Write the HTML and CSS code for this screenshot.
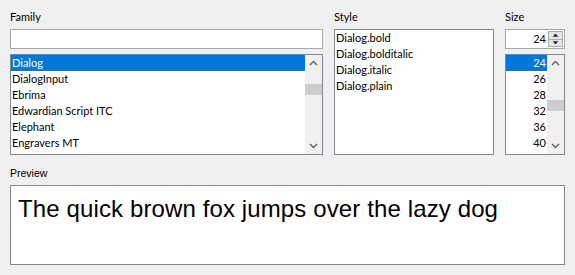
FILE: index.html
```html
<!DOCTYPE html>
<html lang="en">
<head>
    <meta charset="UTF-8">
    <title>Font chooser</title>
    <link rel="stylesheet" href="styles.css">
</head>
<body>
    <div class="chooser">
        <div class="top-row">
            <!-- family -->
            <div class="col col-family">
                <div class="label">Family</div>
                <div class="text-field"></div>
                <div class="list list-family">
                    <div class="items">
                        <div class="item selected">Dialog</div>
                        <div class="item">DialogInput</div>
                        <div class="item">Ebrima</div>
                        <div class="item">Edwardian Script ITC</div>
                        <div class="item">Elephant</div>
                        <div class="item">Engravers MT</div>
                    </div>
                    <div class="scrollbar">
                        <svg class="arrow" width="17" height="17" viewBox="0 0 17 17"><path d="M5 10 L8.5 6.5 L12 10" fill="none" stroke="#606060" stroke-width="1.4"/></svg>
                        <div class="track"><div class="thumb thumb-family"></div></div>
                        <svg class="arrow" width="17" height="17" viewBox="0 0 17 17"><path d="M5 7 L8.5 10.5 L12 7" fill="none" stroke="#606060" stroke-width="1.4"/></svg>
                    </div>
                </div>
            </div>

            <!-- style -->
            <div class="col col-style">
                <div class="label">Style</div>
                <div class="list list-style">
                    <div class="items">
                        <div class="item">Dialog.bold</div>
                        <div class="item">Dialog.bolditalic</div>
                        <div class="item">Dialog.italic</div>
                        <div class="item">Dialog.plain</div>
                    </div>
                </div>
            </div>

            <!-- size -->
            <div class="col col-size">
                <div class="label">Size</div>
                <div class="spinner">
                    <div class="spin-value">24</div>
                    <div class="spin-buttons">
                        <div class="spin-btn"><svg width="14" height="8" viewBox="0 0 14 8"><path d="M4 6 L7 2.5 L10 6 Z" fill="#202020"/></svg></div>
                        <div class="spin-btn"><svg width="14" height="8" viewBox="0 0 14 8"><path d="M4 2 L7 5.5 L10 2 Z" fill="#202020"/></svg></div>
                    </div>
                </div>
                <div class="list list-size">
                    <div class="items">
                        <div class="item num selected">24</div>
                        <div class="item num">26</div>
                        <div class="item num">28</div>
                        <div class="item num">32</div>
                        <div class="item num">36</div>
                        <div class="item num">40</div>
                    </div>
                    <div class="scrollbar">
                        <svg class="arrow" width="17" height="17" viewBox="0 0 17 17"><path d="M5 10 L8.5 6.5 L12 10" fill="none" stroke="#606060" stroke-width="1.4"/></svg>
                        <div class="track"><div class="thumb thumb-size"></div></div>
                        <svg class="arrow" width="17" height="17" viewBox="0 0 17 17"><path d="M5 7 L8.5 10.5 L12 7" fill="none" stroke="#606060" stroke-width="1.4"/></svg>
                    </div>
                </div>
            </div>
        </div>

        <div class="preview-label">Preview</div>
        <div class="preview-box">The quick brown fox jumps over the lazy dog</div>
    </div>
</body>
</html>
```

FILE: styles.css
```css
* {
    margin: 0;
    padding: 0;
    box-sizing: border-box;
}

body {
    background: #f0f0f0;
    color: #000;
    font-family: Lato, 'Noto Sans', sans-serif;
    font-size: 11px;
}

.chooser {
    padding: 9px 10px 0 10px;
}

.top-row {
    display: flex;
    gap: 11px;
}

.col {
    display: flex;
    flex-direction: column;
}

.col-family {
    width: 313px;
}

.col-style {
    width: 160px;
}

.col-size {
    width: 60px;
}

.label {
    height: 20px;
    line-height: 16px;
}

.text-field {
    height: 20px;
    background: #fff;
    border: 1px solid #a8a8a8;
    margin-bottom: 5px;
}

.list {
    display: flex;
    background: #fff;
    border: 1px solid #828790;
    overflow: hidden;
}

.list-family {
    height: 101px;
}

.list-style {
    height: 126px;
}

.list-size {
    height: 101px;
}

.items {
    flex: 1;
    overflow: hidden;
}

.item {
    height: 16px;
    line-height: 16px;
    padding-left: 1px;
    white-space: nowrap;
}

.item.num {
    text-align: right;
    padding-right: 1px;
}

.item.selected {
    background: #0078d7;
    color: #fff;
}

.scrollbar {
    width: 17px;
    background: #f0f0f0;
    display: flex;
    flex-direction: column;
}

.arrow {
    display: block;
}

.track {
    flex: 1;
    position: relative;
}

.thumb {
    position: absolute;
    left: 0;
    right: 0;
    background: #cdcdcd;
}

.thumb-family {
    top: 12px;
    height: 11px;
}

.thumb-size {
    top: 28px;
    height: 11px;
}

.spinner {
    display: flex;
    height: 20px;
    background: #fff;
    border: 1px solid #a8a8a8;
    margin-bottom: 5px;
}

.spin-value {
    flex: 1;
    text-align: right;
    line-height: 18px;
    padding-right: 2px;
}

.spin-buttons {
    width: 16px;
    display: flex;
    flex-direction: column;
    padding: 1px 1px 1px 0;
}

.spin-btn {
    flex: 1;
    background: #e5e5e5;
    border: 1px solid #adadad;
    display: flex;
    align-items: center;
    justify-content: center;
    overflow: hidden;
}

.spin-btn + .spin-btn {
    border-top: none;
}

.spin-btn svg {
    display: block;
}

.preview-label {
    margin-top: 11px;
    height: 19px;
    font-family: 'Liberation Sans', Arial, sans-serif;
    font-size: 10.5px;
    line-height: 14px;
}

.preview-box {
    width: 555px;
    height: 80px;
    background: #fff;
    border: 1px solid #828790;
    font-family: 'Liberation Sans', Arial, sans-serif;
    font-size: 24px;
    letter-spacing: 0.12px;
    line-height: 28px;
    padding: 9px 0 0 7px;
}
```
